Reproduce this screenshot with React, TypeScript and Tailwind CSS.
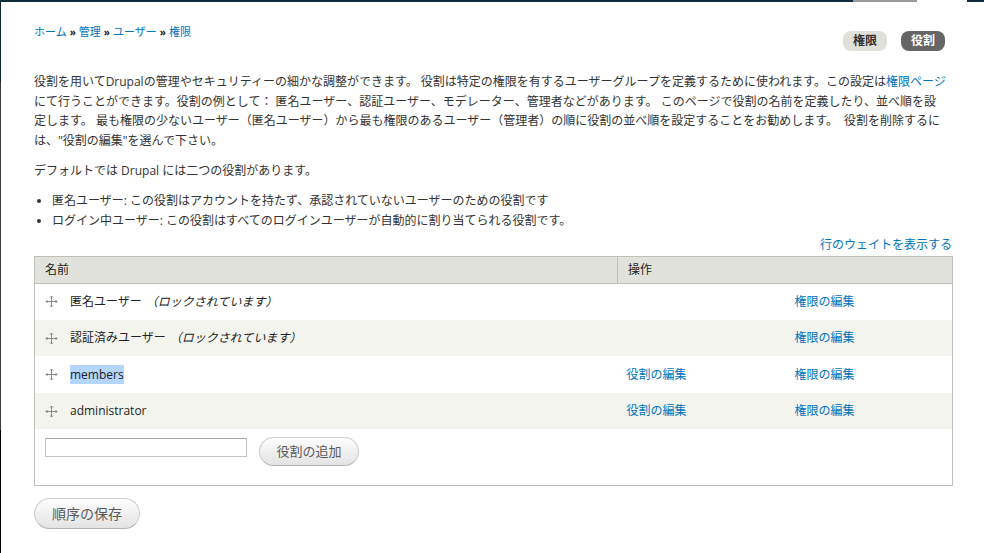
import React from "react";

const roles = [
  { name: "匿名ユーザー", locked: true, editable: false, selected: false },
  { name: "認証済みユーザー", locked: true, editable: false, selected: false },
  { name: "members", locked: false, editable: true, selected: true },
  { name: "administrator", locked: false, editable: true, selected: false },
];

export default function App() {
  return (
    <div className="w-[984px] h-[553px] overflow-hidden bg-white flex flex-col font-['Open_Sans','Noto_Sans_CJK_JP',sans-serif] text-[#333]">
      {/* overlay frame edge */}
      <div className="flex h-[2px] shrink-0">
        <div className="w-[853px] bg-[#0e2a3b]" />
        <div className="w-[64px] bg-[#9a9a9a]" />
        <div className="w-[50px] bg-white" />
        <div className="flex-1 bg-[#0e2a3b]" />
      </div>

      <div className="flex flex-1">
        <div className="w-px flex flex-col shrink-0">
          <div className="h-[80px] bg-[#0e2a3b]" />
          <div className="h-[348px] bg-[#3a3a3a]" />
          <div className="flex-1 bg-black" />
        </div>

        <main className="flex-1 pl-[33px] pr-[31px] pt-[22px]">
          {/* Header */}
          <div className="flex justify-between items-start h-[48px]">
            <nav className="text-[11px] leading-[16px] flex items-center gap-[3px]">
              <a href="#" className="text-[#0074bd]">ホーム</a>
              <span className="text-[#222] text-[10px] font-bold">»</span>
              <a href="#" className="text-[#0074bd]">管理</a>
              <span className="text-[#222] text-[10px] font-bold">»</span>
              <a href="#" className="text-[#0074bd]">ユーザー</a>
              <span className="text-[#222] text-[10px] font-bold">»</span>
              <a href="#" className="text-[#0074bd]">権限</a>
            </nav>
            <ul className="flex gap-[14px] mt-[7px] mr-[8px]">
              <li>
                <a href="#" className="flex items-center justify-center w-[44px] h-[20px] rounded-[8px] bg-[#e0e0d8] text-[12px] font-bold text-[#333]">
                  権限
                </a>
              </li>
              <li>
                <a href="#" className="flex items-center justify-center w-[44px] h-[20px] rounded-[8px] bg-[#666] text-[12px] font-bold text-white">
                  役割
                </a>
              </li>
            </ul>
          </div>

          {/* Help */}
          <p className="text-[12px] leading-[19.6px]">
            役割を用いてDrupalの管理やセキュリティーの細かな調整ができます。 役割は特定の権限を有するユーザーグループを定義するために使われます。この設定は
            <a href="#" className="text-[#0074bd]">権限ページ</a>
            にて行うことができます。役割の例として： 匿名ユーザー、認証ユーザー、モデレーター、管理者などがあります。 このページで役割の名前を定義したり、並べ順を設
            <br />
            定します。 最も権限の少ないユーザー（匿名ユーザー）から最も権限のあるユーザー（管理者）の順に役割の並べ順を設定することをお勧めします。　役割を削除するに
            <br />
            は、"役割の編集"を選んで下さい。
          </p>
          <p className="text-[12px] leading-[19.6px] mt-[11px]">
            デフォルトでは Drupal には二つの役割があります。
          </p>
          <ul className="text-[12px] leading-[20.5px] mt-[10px] list-disc pl-[18px]">
            <li>匿名ユーザー: この役割はアカウントを持たず、承認されていないユーザーのための役割です</li>
            <li>ログイン中ユーザー: この役割はすべてのログインユーザーが自動的に割り当てられる役割です。</li>
          </ul>

          <div className="flex justify-end mt-[3px] mr-px">
            <a href="#" className="text-[12px] leading-[19px] text-[#0074bd]">
              行のウェイトを表示する
            </a>
          </div>

          {/* Roles table */}
          <table className="mt-[2px] w-full table-fixed border-collapse border border-[#bebfb9] text-[12px]">
            <colgroup>
              <col className="w-[583px]" />
              <col className="w-[167px]" />
              <col />
            </colgroup>
            <thead>
              <tr className="bg-[#e1e2dc] border-b border-[#bebfb9]">
                <th className="h-[27px] px-[10px] text-left font-normal text-[#222]">名前</th>
                <th colSpan={2} className="h-[27px] px-[10px] text-left font-normal text-[#222] border-l border-[#bebfb9]">
                  操作
                </th>
              </tr>
            </thead>
            <tbody>
              {roles.map((role, idx) => (
                <tr key={role.name} className={idx % 2 === 0 ? "bg-white" : "bg-[#f3f4ee]"}>
                  <td className="h-[36.5px] pl-[10px] pr-[10px]">
                    <div className="flex items-center">
                      <DragHandle />
                      <span className="ml-[12px] text-[#222]">
                        {role.selected ? (
                          <span className="bg-[#b4d5fe] py-px">{role.name}</span>
                        ) : (
                          role.name
                        )}
                      </span>
                      {role.locked && <em className="ml-[4px] text-[#222]">（ロックされています）</em>}
                    </div>
                  </td>
                  <td className="h-[36.5px] px-[9px]">
                    {role.editable && (
                      <a href="#" className="text-[#0074bd]">役割の編集</a>
                    )}
                  </td>
                  <td className="h-[36.5px] px-[10px]">
                    <a href="#" className="text-[#0074bd]">権限の編集</a>
                  </td>
                </tr>
              ))}
              <tr className="bg-white">
                <td colSpan={3} className="px-[10px] pt-[8px] pb-[19px] align-top">
                  <div className="flex items-start gap-[12px]">
                    <input
                      type="text"
                      className="mt-px w-[202px] h-[19px] border border-[#c4c4c4] border-t-[#a8a8a8] bg-white outline-none"
                    />
                    <Button className="w-[100px] h-[29px] text-[13px]">役割の追加</Button>
                  </div>
                </td>
              </tr>
            </tbody>
          </table>

          <div className="mt-[12px]">
            <Button className="w-[106px] h-[31px] text-[14px]">順序の保存</Button>
          </div>
        </main>
      </div>
    </div>
  );
}

function Button({ className, children }: { className: string; children: React.ReactNode }) {
  return (
    <button
      type="button"
      className={
        "flex items-center justify-center rounded-full border border-[#cdcdcd] border-b-[#b4b4b4] bg-gradient-to-b from-[#fdfdfd] to-[#e3e3e3] text-[#5a5a5a] " +
        className
      }
    >
      {children}
    </button>
  );
}

function DragHandle() {
  return (
    <svg width="13" height="13" viewBox="0 0 13 13" className="shrink-0" fill="none" stroke="#888" strokeWidth="1">
      <path d="M6.5 1 V12 M1 6.5 H12" />
      <path d="M5 2.5 L6.5 1 L8 2.5 M5 10.5 L6.5 12 L8 10.5 M2.5 5 L1 6.5 L2.5 8 M10.5 5 L12 6.5 L10.5 8" />
    </svg>
  );
}
